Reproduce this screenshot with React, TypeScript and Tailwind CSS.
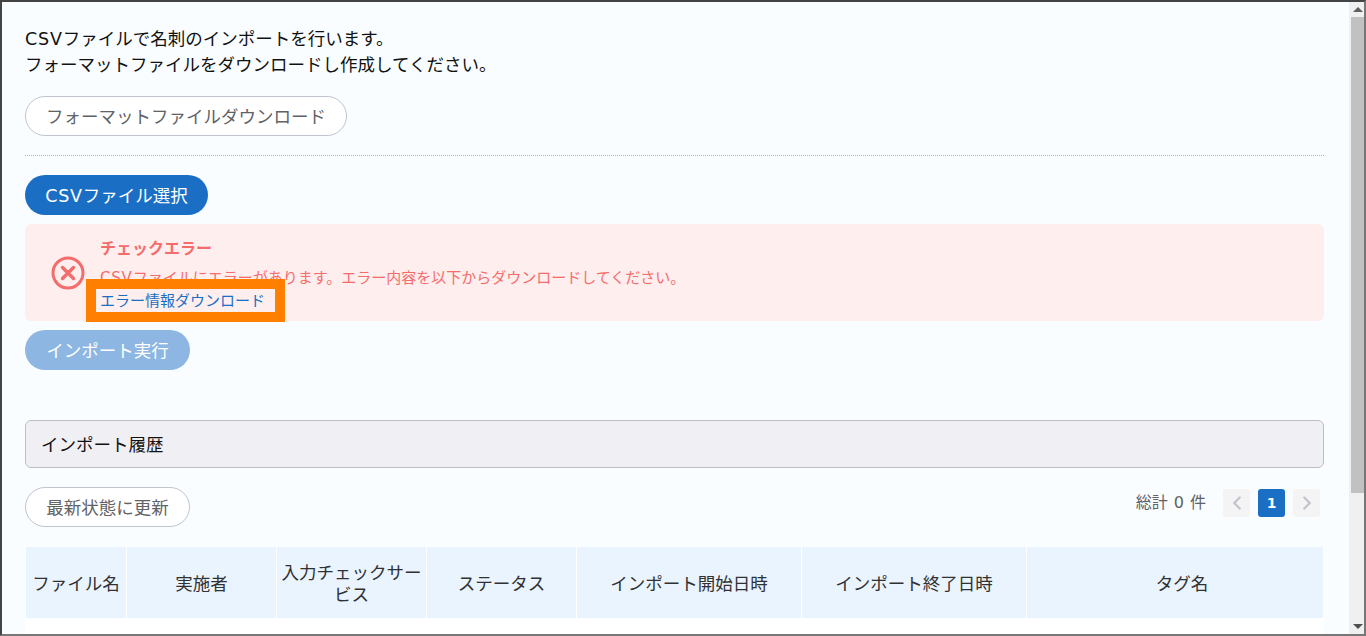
import React from 'react';
import { ChevronLeft, ChevronRight } from 'lucide-react';

const font = 'font-["DejaVu_Sans","Noto_Sans_CJK_JP",sans-serif]';

const columns = [
    { label: 'ファイル名', width: 'w-[100px]', extra: 'px-[4px]' },
    { label: '実施者', width: 'w-[149px]', extra: 'px-[4px]' },
    { label: '入力チェックサービス', width: 'w-[149px]', extra: 'px-[4px]' },
    { label: 'ステータス', width: 'w-[149px]', extra: 'px-[4px]' },
    { label: 'インポート開始日時', width: 'w-[224px]', extra: 'px-[4px]' },
    { label: 'インポート終了日時', width: 'w-[224px]', extra: 'px-[4px]' },
    { label: 'タグ名', width: 'flex-1', extra: 'pl-[14px]' },
];

// Latin capitals run a little wider in the reference
const Csv: React.FC = () => <span className="tracking-[0.8px]">CSV</span>;

const App: React.FC = () => {
    return (
        <div className={`${font} flex h-[636px] w-[1366px] overflow-hidden border-t-2 border-r-2 border-b-2 border-l-2 border-t-[#444444] border-r-[#777777] border-b-[#777777] border-l-[#444444] bg-[#f9fdff] text-[17.5px] leading-[26px] text-[#1f1f1f]`}>
            {/* Content */}
            <main className="min-w-0 flex-1 pt-[24px] pr-[25px] pl-[23px]">
                <p className="text-[#111111]"><Csv />ファイルで名刺のインポートを行います。</p>
                <p className="text-[#111111]">フォーマットファイルをダウンロードし作成してください。</p>

                <button className="mt-[18px] block h-[40px] w-[322px] rounded-full border border-[#c0c4cc] bg-white pt-[2px] text-center text-[#606266]">
                    フォーマットファイルダウンロード
                </button>

                <div className="mt-[19px] border-t border-dotted border-[#b5b5b5]"></div>

                <button className="mt-[19px] block h-[40px] w-[183px] rounded-full bg-[#1a6fc4] pt-[2px] text-center text-white">
                    <Csv />ファイル選択
                </button>

                {/* Error alert */}
                <div className="relative mt-[9px] flex h-[97px] items-center rounded-[6px] bg-[#feeeee] text-[#f56c6c]">
                    <div className="flex w-[75px] pl-[26px]">
                        <svg width="34" height="34" viewBox="0 0 34 34" fill="none" stroke="#f56c6c">
                            <circle cx="17" cy="17" r="15" strokeWidth="3" />
                            <path d="M11.5 11.5l11 11M22.5 11.5l-11 11" strokeWidth="3.4" strokeLinecap="round" />
                        </svg>
                    </div>
                    <div className="flex h-full flex-col">
                        <p className="mt-[12px] text-[16px] leading-[26px] font-bold">チェックエラー</p>
                        <p className="mt-[3px] text-[15px] leading-[26px]"><Csv />ファイルにエラーがあります。エラー内容を以下からダウンロードしてください。</p>
                        <a className="text-[15px] leading-[20px] text-[#1a6fc4]">エラー情報ダウンロード</a>
                    </div>
                    {/* Annotation box */}
                    <div className="absolute top-[55px] left-[61px] h-[43px] w-[199px] border-[10px] border-[#ff8000]"></div>
                </div>

                <button className="mt-[9px] block h-[40px] w-[165px] rounded-full bg-[#8db7e2] pt-[2px] text-center text-white">
                    インポート実行
                </button>

                <div className="mt-[50px] flex h-[48px] items-center rounded-[6px] border border-[#bdbdc2] bg-[#f0eff4] pt-[2px] pl-[15px] text-[#111111]">
                    インポート履歴
                </div>

                <div className="mt-[19px] flex items-start justify-between">
                    <button className="h-[40px] w-[165px] rounded-full border border-[#c0c4cc] bg-white pt-[2px] text-center text-[#606266]">
                        最新状態に更新
                    </button>
                    <div className="mt-[2px] flex items-center pr-[4px]">
                        <span className="mr-[17px] flex items-center gap-[6px] text-[16px] text-[#606266]">
                            <span>総計</span>
                            <span>0</span>
                            <span>件</span>
                        </span>
                        <span className="flex h-[28px] w-[27px] items-center justify-center rounded-[3px] bg-[#f4f4f5] text-[#c0c4cc]">
                            <ChevronLeft size={22} strokeWidth={2.5} />
                        </span>
                        <span className="ml-[8px] flex h-[28px] w-[27px] items-center justify-center rounded-[3px] bg-[#1a6fc4] text-[14px] font-semibold text-white">
                            1
                        </span>
                        <span className="ml-[8px] flex h-[28px] w-[27px] items-center justify-center rounded-[3px] bg-[#f4f4f5] text-[#c0c4cc]">
                            <ChevronRight size={22} strokeWidth={2.5} />
                        </span>
                    </div>
                </div>

                {/* History table */}
                <div className="mt-[20px] bg-white px-[1px]">
                    <div className="flex h-[71px] gap-[1px]">
                        {columns.map((col) => (
                            <div
                                key={col.label}
                                className={`${col.width} ${col.extra} flex items-center justify-center bg-[#eaf4fe] pt-[2px] text-center leading-[22px] text-[#303133]`}
                            >
                                {col.label}
                            </div>
                        ))}
                    </div>
                    <div className="h-[20px]"></div>
                </div>
            </main>

            {/* Scrollbar */}
            <div className="flex w-[15px] flex-col bg-[#f0f0f0]">
                <div className="flex h-[15px] items-center justify-center pl-[2px]">
                    <div className="h-0 w-0 border-x-[5px] border-b-[5px] border-x-transparent border-b-[#606060]"></div>
                </div>
                <div className="ml-[2px] h-[476px] bg-[#c1c1c1]"></div>
                <div className="flex-1"></div>
                <div className="flex h-[15px] items-center justify-center pl-[2px]">
                    <div className="h-0 w-0 border-x-[5px] border-t-[5px] border-x-transparent border-t-[#505050]"></div>
                </div>
            </div>
        </div>
    );
};

export default App;
